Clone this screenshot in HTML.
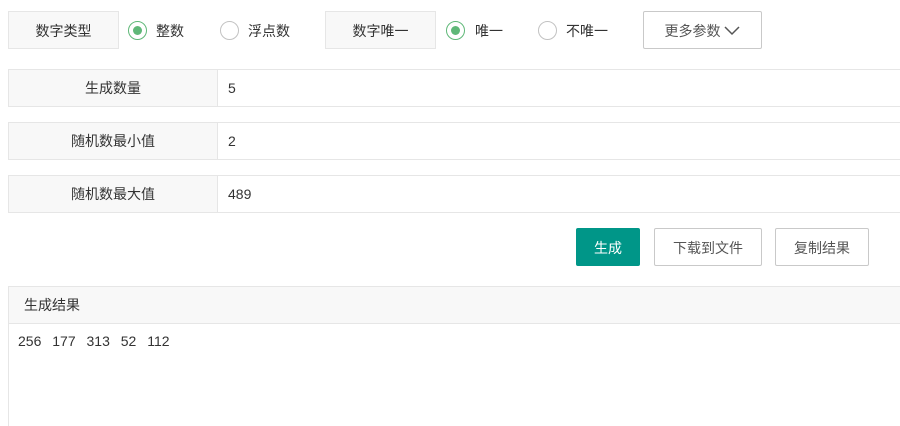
<!DOCTYPE html>
<html><head><meta charset="utf-8"><style>
*{margin:0;padding:0;box-sizing:border-box}
html,body{width:900px;height:426px;overflow:hidden}
body{background:#fff;font-family:"Liberation Sans","Noto Sans CJK SC",sans-serif;font-size:14px;color:#333;position:relative}
.a{position:absolute}
.lab{background:#f8f8f8;border:1px solid #e6e6e6;text-align:center;line-height:38px;color:#333}
.r{width:19px;height:19px;border:1px solid #c2c2c2;border-radius:50%}
.r.on{border-color:#5fb878}
.r.on:after{content:"";position:absolute;left:4px;top:4px;width:9px;height:9px;border-radius:50%;background:#5fb878}
.t{line-height:20px}
.row{left:8px;width:892px;height:38px;border:1px solid #e6e6e6;border-right:none}
.row .l{position:absolute;left:0;top:0;width:209px;height:36px;background:#f8f8f8;border-right:1px solid #e6e6e6;text-align:center;line-height:36px}
.row .v{position:absolute;left:219px;top:0;line-height:36px}
.btn{border:1px solid #c9c9c9;border-radius:2px;text-align:center;line-height:38px;color:#555;background:#fff}
</style></head><body>
<div class="a lab" style="left:8px;top:11px;width:111px;height:38px">数字类型</div>
<div class="a r on" style="left:128px;top:21px"></div><div class="a t" style="left:156px;top:21px">整数</div>
<div class="a r" style="left:220px;top:21px"></div><div class="a t" style="left:248px;top:21px">浮点数</div>
<div class="a lab" style="left:325px;top:11px;width:111px;height:38px">数字唯一</div>
<div class="a r on" style="left:446px;top:21px"></div><div class="a t" style="left:475px;top:21px">唯一</div>
<div class="a r" style="left:538px;top:21px"></div><div class="a t" style="left:566px;top:21px">不唯一</div>
<div class="a btn" style="left:643px;top:11px;width:119px;height:38px">更多参数 <svg width="16" height="10" viewBox="0 0 16 10" style="vertical-align:0px"><path d="M1 1L8 8L15 1" fill="none" stroke="#555" stroke-width="1.5"/></svg></div>
<div class="a row" style="top:69px"><div class="l">生成数量</div><div class="v">5</div></div>
<div class="a row" style="top:122px"><div class="l">随机数最小值</div><div class="v">2</div></div>
<div class="a row" style="top:175px"><div class="l">随机数最大值</div><div class="v">489</div></div>
<div class="a btn" style="left:576px;top:228px;width:64px;height:38px;background:#009688;border-color:#009688;color:#fff">生成</div>
<div class="a btn" style="left:654px;top:228px;width:108px;height:38px">下载到文件</div>
<div class="a btn" style="left:775px;top:228px;width:94px;height:38px">复制结果</div>
<div class="a" style="left:8px;top:286px;width:892px;height:140px;border-left:1px solid #e6e6e6;border-top:1px solid #e6e6e6">
<div style="height:37px;background:#f8f8f8;border-bottom:1px solid #e6e6e6;line-height:36px;padding-left:15px">生成结果</div>
<div style="padding:8px 0 0 9px;line-height:18px;word-spacing:7px">256 177 313 52 112</div>
</div>
</body></html>
